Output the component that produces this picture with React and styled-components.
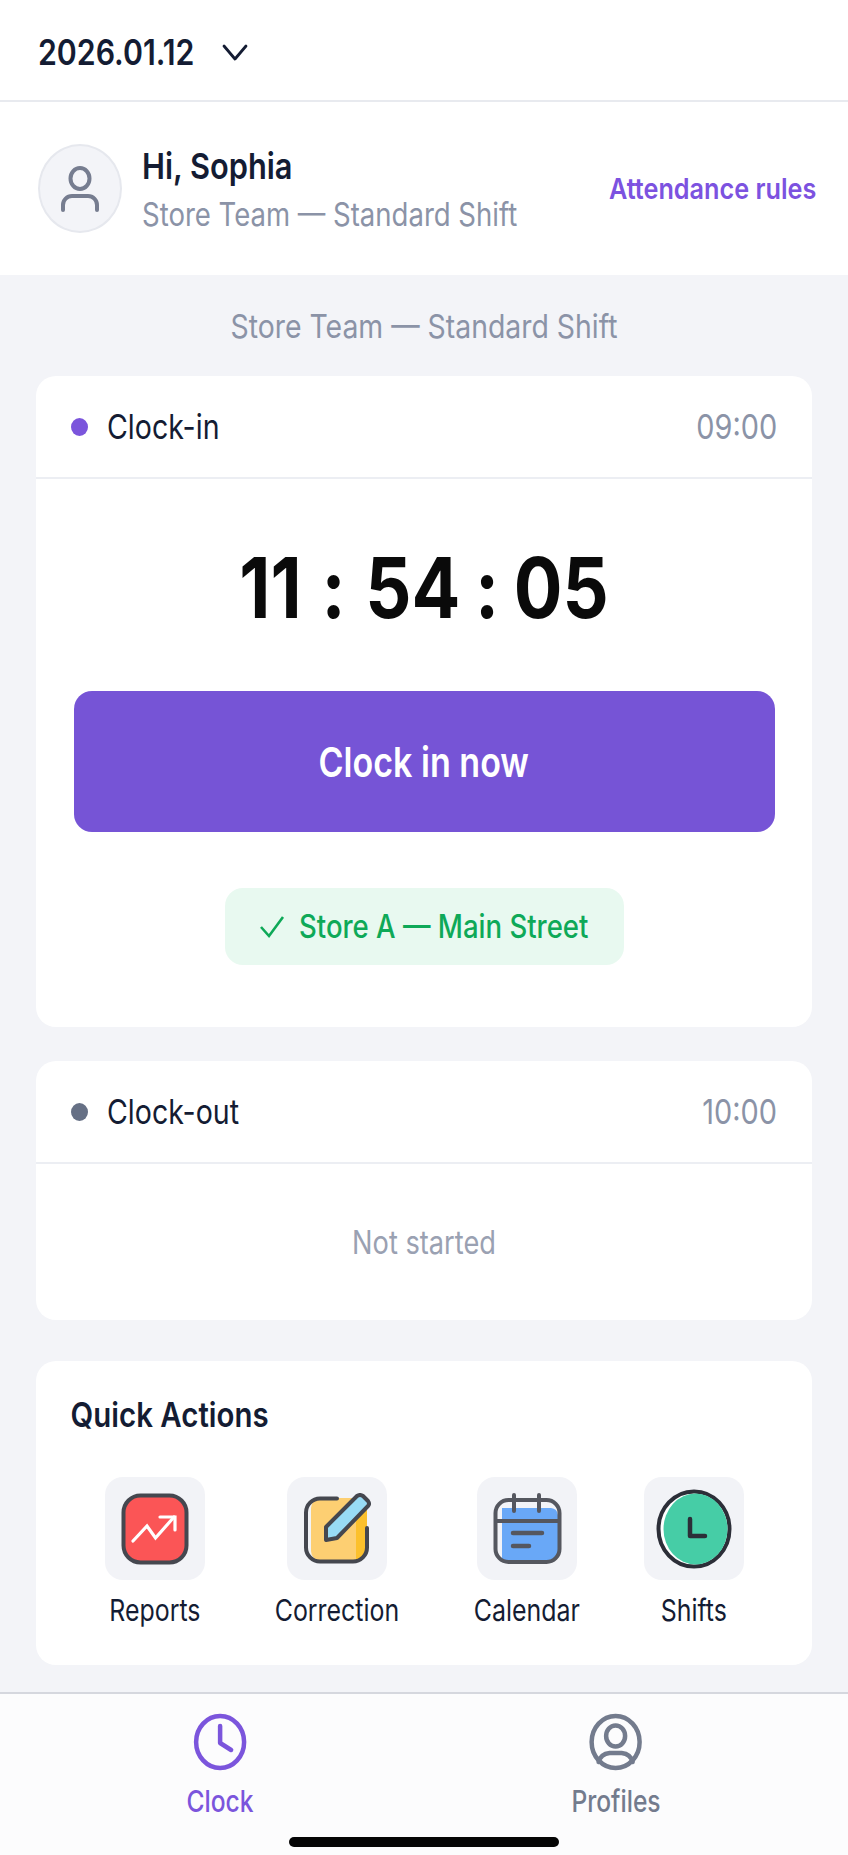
import React from "react";
import styled, { createGlobalStyle, css } from "styled-components";

const Global = createGlobalStyle`
    html, body { margin: 0; padding: 0; background: #f3f4f8; }
    * { box-sizing: border-box; }
    body { font-family: Inter, "Liberation Sans", sans-serif; }
`;

// the type in the screenshot is taller than it is wide
const narrow = (amount, origin = "left") => css`
    transform: scaleX(${amount});
    transform-origin: ${origin} center;
`;

const Page = styled.div`
    width: 848px;
    height: 1855px;
    display: flex;
    flex-direction: column;
    overflow: hidden;
    background: #f3f4f8;
`;

const TopBar = styled.header`
    height: 102px;
    flex: none;
    display: flex;
    align-items: center;
    gap: 3px;
    padding: 4px 38px 0;
    background: #fff;
    border-bottom: 2px solid #e8eaef;
    color: #141c33;
`;

const DateText = styled.span`
    font-size: 35px;
    font-weight: 600;
    ${narrow(0.865)}
`;

const UserRow = styled.section`
    height: 173px;
    flex: none;
    display: flex;
    align-items: center;
    padding: 0 32px 0 38px;
    background: #fff;
`;

const Avatar = styled.div`
    width: 84px;
    height: 89px;
    flex: none;
    display: flex;
    align-items: center;
    justify-content: center;
    border-radius: 50%;
    background: #f3f4f8;
    border: 2px solid #e6e8ee;
    margin-right: 20px;
`;

const UserText = styled.div`
    display: flex;
    flex: 1;
    min-width: 0;
    flex-direction: column;
    gap: 10px;
    padding-top: 3px;
`;

const Greeting = styled.div`
    font-size: 36px;
    line-height: 40px;
    font-weight: 600;
    color: #141c33;
    ${narrow(0.855)}
`;

const Muted = styled.div`
    font-size: ${(p) => (p.$center ? 33 : 32)}px;
    line-height: 38px;
    white-space: nowrap;
    color: #8b93a7;
    text-align: ${(p) => (p.$center ? "center" : "left")};
    ${(p) => narrow(0.86, p.$center ? "center" : "left")}
`;

const RulesLink = styled.a`
    flex: none;
    white-space: nowrap;
    font-size: 29px;
    font-weight: 600;
    color: #7c52e0;
    ${narrow(0.87, "right")}
`;

const Main = styled.main`
    flex: 1;
    display: flex;
    flex-direction: column;
    padding: 32px 36px 0 36px;
`;

const Card = styled.section`
    background: #fff;
    border-radius: 20px;
    margin-top: ${(p) => p.$top}px;
    height: ${(p) => p.$height}px;
    display: flex;
    flex-direction: column;
`;

const CardHead = styled.div`
    height: 103px;
    flex: none;
    display: flex;
    align-items: center;
    padding: 0 35px;
    border-bottom: 2px solid #eceef3;
`;

const Dot = styled.span`
    width: 17px;
    height: 18px;
    border-radius: 50%;
    background: ${(p) => p.$color};
    margin-right: 19px;
`;

const HeadTitle = styled.span`
    flex: 1;
    font-size: 34px;
    color: #141c33;
    ${narrow(0.84)}
`;

const HeadTime = styled.span`
    font-size: 34px;
    color: #8b93a7;
    ${narrow(0.85, "right")}
`;

const Timer = styled.div`
    display: flex;
    justify-content: center;
    align-items: center;
    gap: 17px;
    height: 98px;
    margin-top: 59px;
    font-size: 84px;
    font-weight: 700;
    color: #0a0a0a;
    ${narrow(0.86, "center")}
`;

const Colon = styled.span`
    margin: 0 ${(p) => p.$extra || 0}px;
`;

const ClockButton = styled.button`
    display: flex;
    align-items: center;
    justify-content: center;
    width: 701px;
    height: 141px;
    margin: 55px auto 0;
    border: 0;
    border-radius: 18px;
    background: #7654d6;
    color: #fff;
    font-family: inherit;
    font-size: 41px;
    font-weight: 600;
`;

const ButtonLabel = styled.span`
    ${narrow(0.83, "center")}
`;

const StoreBadge = styled.div`
    align-self: center;
    width: 399px;
    height: 77px;
    margin-top: 56px;
    display: flex;
    align-items: center;
    gap: 13px;
    padding-left: 33px;
    border-radius: 18px;
    background: #e8f9f0;
    color: #0ea958;
    font-size: 32px;
    font-weight: 500;

    svg {
        flex: none;
    }
`;

const StoreName = styled.span`
    flex: none;
    white-space: nowrap;
    ${narrow(0.86)}
`;

const EmptyNote = styled.div`
    flex: 1;
    display: flex;
    align-items: center;
    justify-content: center;
    font-size: 32px;
    color: #9aa1b2;
    ${narrow(0.85, "center")}
`;

const QuickTitle = styled.h2`
    margin: 0;
    padding: 32px 0 0 40px;
    font-size: 34px;
    line-height: 44px;
    font-weight: 600;
    color: #141c33;
    ${narrow(0.865)}
`;

const ActionGrid = styled.div`
    display: flex;
    margin-top: 40px;
    padding-left: 69px;
`;

const Action = styled.div`
    width: 100px;
    margin-left: ${(p) => p.$gap}px;
    display: flex;
    flex-direction: column;
    align-items: center;
`;

const ActionTile = styled.div`
    width: 100px;
    height: 103px;
    display: flex;
    align-items: center;
    justify-content: center;
    border-radius: 18px;
    background: #f2f3f7;
`;

const ActionLabel = styled.span`
    margin-top: 11px;
    white-space: nowrap;
    font-size: 30px;
    line-height: 38px;
    color: #141c33;
    ${narrow(0.83, "center")}
`;

const TabBar = styled.nav`
    position: relative;
    height: 163px;
    flex: none;
    padding-top: 19px;
    background: #fcfcfd;
    border-top: 2px solid #d5d7de;
`;

const Tab = styled.div`
    position: absolute;
    left: ${(p) => p.$x}px;
    transform: translateX(-50%);
    display: flex;
    flex-direction: column;
    align-items: center;
    gap: 11px;
    color: ${(p) => p.$color};
`;

const TabLabel = styled.span`
    font-size: 30px;
    line-height: 38px;
    font-weight: 500;
    ${narrow(0.82, "center")}
`;

const HomeBar = styled.div`
    position: absolute;
    left: 289px;
    bottom: 8px;
    width: 270px;
    height: 10px;
    border-radius: 5px;
    background: #050505;
`;

const stroke = "#45474f";

function ChevronIcon() {
    return (
        <svg width="26" height="17" viewBox="0 0 26 17" fill="none" stroke="#141c33" strokeWidth="2.8" strokeLinecap="round" strokeLinejoin="round">
            <path d="M2 2 L13 15 L24 2" />
        </svg>
    );
}

function PersonIcon() {
    return (
        <svg width="40" height="46" viewBox="0 0 40 46" fill="none" stroke="#767d90" strokeWidth="4" strokeLinecap="round">
            <ellipse cx="20" cy="12.5" rx="9.5" ry="10.5" />
            <path d="M3 44 v-5 a9 9 0 0 1 9 -9 h16 a9 9 0 0 1 9 9 v5" />
        </svg>
    );
}

function ReportsIcon() {
    return (
        <svg width="68" height="72" viewBox="0 0 68 72" fill="none">
            <rect x="2.5" y="2.5" width="63" height="67" rx="17" fill="#fb5556" stroke={stroke} strokeWidth="4" />
            <path d="M12 48 L26 33 L34.5 45 L53 24" stroke="#fff" strokeWidth="3.2" strokeLinecap="round" />
            <path d="M39 24 H54 V37" stroke="#fff" strokeWidth="3.2" strokeLinecap="round" />
        </svg>
    );
}

function CorrectionIcon() {
    return (
        <svg width="68" height="72" viewBox="0 0 68 72" fill="none">
            <rect x="8" y="5" width="56" height="63" rx="10" fill="#fdcf72" />
            <path d="M53 5 h1 a10 10 0 0 1 10 10 v43 a10 10 0 0 1 -10 10 h-1z" fill="#fcc02c" />
            <path d="M34 5.5 H17 a14 14 0 0 0 -14 14 v35 a14 14 0 0 0 14 14 h33 a14 14 0 0 0 14 -14 V35" stroke={stroke} strokeWidth="4" strokeLinecap="round" />
            <path d="M23 34 L54 3 Q57 1 60 3 L65 8 Q67 11 65 13 L34 45 L23 47 Z" fill="#98dbf5" stroke={stroke} strokeWidth="4" strokeLinejoin="round" />
        </svg>
    );
}

function CalendarIcon() {
    return (
        <svg width="69" height="72" viewBox="0 0 69 72" fill="none">
            <path d="M9 15 H58 a8 8 0 0 1 7 7 V58 a9 9 0 0 1 -9 9 H9z" fill="#69a8f7" />
            <rect x="2.5" y="7" width="64" height="62" rx="13" stroke="#55575f" strokeWidth="4" />
            <path d="M3 28 H66" stroke="#55575f" strokeWidth="4" />
            <path d="M21 2 V18 M46 2 V18" stroke="#55575f" strokeWidth="4" strokeLinecap="round" />
            <path d="M20 40 H49 M20 53 H36" stroke="#55575f" strokeWidth="4.5" strokeLinecap="round" />
        </svg>
    );
}

function ShiftsIcon() {
    return (
        <svg width="76" height="80" viewBox="0 0 76 80" fill="none">
            <ellipse cx="38" cy="40" rx="35.5" ry="37.5" fill="#fff" stroke="#2c2e38" strokeWidth="4" />
            <ellipse cx="39.5" cy="40" rx="32" ry="35.5" fill="#46cda6" />
            <path d="M34 30 V47 H49" stroke="#2c2e38" strokeWidth="4.5" strokeLinecap="round" strokeLinejoin="round" />
        </svg>
    );
}

function ClockTabIcon() {
    return (
        <svg width="54" height="58" viewBox="0 0 54 58" fill="none" stroke="#7b55dc" strokeWidth="4.5" strokeLinecap="round" strokeLinejoin="round">
            <ellipse cx="27" cy="29" rx="24" ry="26" />
            <path d="M27 13 V30 L38 37" />
        </svg>
    );
}

function ProfileTabIcon() {
    return (
        <svg width="54" height="58" viewBox="0 0 54 58" fill="none" stroke="#737b8d" strokeWidth="4.5" strokeLinecap="round">
            <ellipse cx="27" cy="29" rx="24" ry="26" />
            <ellipse cx="27" cy="23" rx="9.5" ry="10.5" />
            <path d="M10 49 Q12 41 21 40 H33 Q42 41 44 49" />
        </svg>
    );
}

function CheckIcon() {
    return (
        <svg width="28" height="26" viewBox="0 0 28 26" fill="none" stroke="#0ea958" strokeWidth="2.6">
            <path d="M3 13 L11 22 L25 3" />
        </svg>
    );
}

const actions = [
    { label: "Reports", icon: <ReportsIcon />, gap: 0 },
    { label: "Correction", icon: <CorrectionIcon />, gap: 82 },
    { label: "Calendar", icon: <CalendarIcon />, gap: 90 },
    { label: "Shifts", icon: <ShiftsIcon />, gap: 67 },
];

export default function App() {
    return (
        <Page>
            <Global />
            <TopBar>
                <DateText>2026.01.12</DateText>
                <ChevronIcon />
            </TopBar>
            <UserRow>
                <Avatar><PersonIcon /></Avatar>
                <UserText>
                    <Greeting>Hi, Sophia</Greeting>
                    <Muted>Store Team — Standard Shift</Muted>
                </UserText>
                <RulesLink>Attendance rules</RulesLink>
            </UserRow>
            <Main>
                <Muted $center>Store Team — Standard Shift</Muted>
                <Card $top={31} $height={651}>
                    <CardHead>
                        <Dot $color="#7b55dc" />
                        <HeadTitle>Clock-in</HeadTitle>
                        <HeadTime>09:00</HeadTime>
                    </CardHead>
                    <Timer>
                        <span>11</span><Colon $extra={6}>:</Colon><span>54</span><Colon>:</Colon><span>05</span>
                    </Timer>
                    <ClockButton><ButtonLabel>Clock in now</ButtonLabel></ClockButton>
                    <StoreBadge><CheckIcon /><StoreName>Store A — Main Street</StoreName></StoreBadge>
                </Card>
                <Card $top={34} $height={259}>
                    <CardHead>
                        <Dot $color="#667085" />
                        <HeadTitle>Clock-out</HeadTitle>
                        <HeadTime>10:00</HeadTime>
                    </CardHead>
                    <EmptyNote>Not started</EmptyNote>
                </Card>
                <Card $top={41} $height={304}>
                    <QuickTitle>Quick Actions</QuickTitle>
                    <ActionGrid>
                        {actions.map((a) => (
                            <Action key={a.label} $gap={a.gap}>
                                <ActionTile>{a.icon}</ActionTile>
                                <ActionLabel>{a.label}</ActionLabel>
                            </Action>
                        ))}
                    </ActionGrid>
                </Card>
            </Main>
            <TabBar>
                <Tab $x={220} $color="#7b55dc"><ClockTabIcon /><TabLabel>Clock</TabLabel></Tab>
                <Tab $x={616} $color="#737b8d"><ProfileTabIcon /><TabLabel>Profiles</TabLabel></Tab>
                <HomeBar />
            </TabBar>
        </Page>
    );
}
